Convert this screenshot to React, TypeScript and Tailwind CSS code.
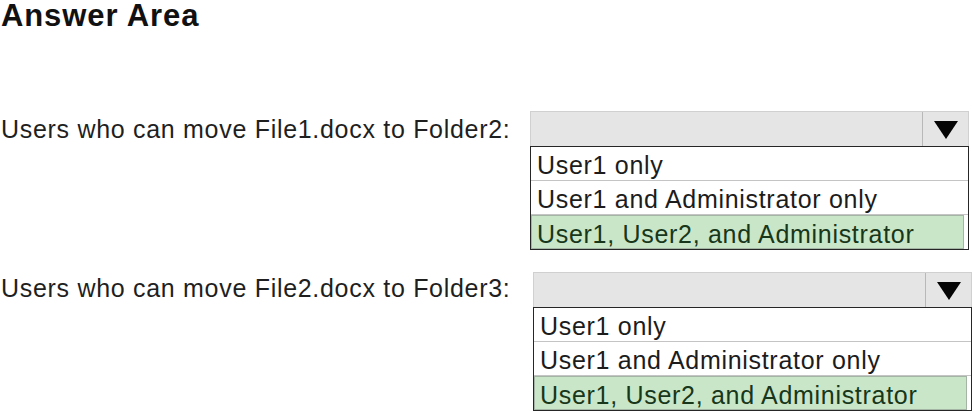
import React from "react";

const options = ["User1 only", "User1 and Administrator only", "User1, User2, and Administrator"];

function Dropdown() {
  return (
    <div className="w-[439px]">
      <div className="h-[35px] flex border border-b-0 border-[#d0d0d0] bg-[#e5e5e5]">
        <div className="flex-1" />
        <div className="w-[46px] border-l border-[#b8b8b8] flex items-center justify-center pt-[2px]">
          <svg width="24" height="18" viewBox="0 0 24 18">
            <polygon points="0,0 24,0 12,18" fill="#050505" />
          </svg>
        </div>
      </div>
      <div className="border border-[#262626] bg-white">
        <div className="h-[34px] border-b border-[#c4c4c4] pl-[6px] pt-[4px] flex items-center text-[#1c1c1c]">
          {options[0]}
        </div>
        <div className="h-[34px] border-b border-[#c4c4c4] pl-[6px] pt-[4px] flex items-center text-[#1c1c1c]">
          {options[1]}
        </div>
        <div className="h-[34px] mr-[4px] border border-[#a5b5a5] bg-[#c9e6c8] pl-[5px] pt-[4px] flex items-center text-[#17361a]">
          {options[2]}
        </div>
      </div>
    </div>
  );
}

export default function App() {
  return (
    <div
      className="w-[974px] h-[412px] overflow-hidden bg-white text-[25px] tracking-[0.7px] leading-none"
      style={{ fontFamily: '"Liberation Sans", Arial, sans-serif' }}
    >
      <h1 className="text-[31px] font-bold tracking-[0.9px] leading-[31px] h-[31px] pl-[1px] text-[#111]">
        Answer Area
      </h1>
      <div className="mt-[80px] flex items-start">
        <div className="w-[530px] h-[35px] pl-[1px] pt-[1px] flex items-center text-[#1f1f1f]">
          Users who can move File1.docx to Folder2:
        </div>
        <Dropdown />
      </div>
      <div className="mt-[22px] flex items-start">
        <div className="w-[533px] h-[33px] pl-[1px] flex items-center text-[#1f1f1f]">
          Users who can move File2.docx to Folder3:
        </div>
        <Dropdown />
      </div>
    </div>
  );
}
